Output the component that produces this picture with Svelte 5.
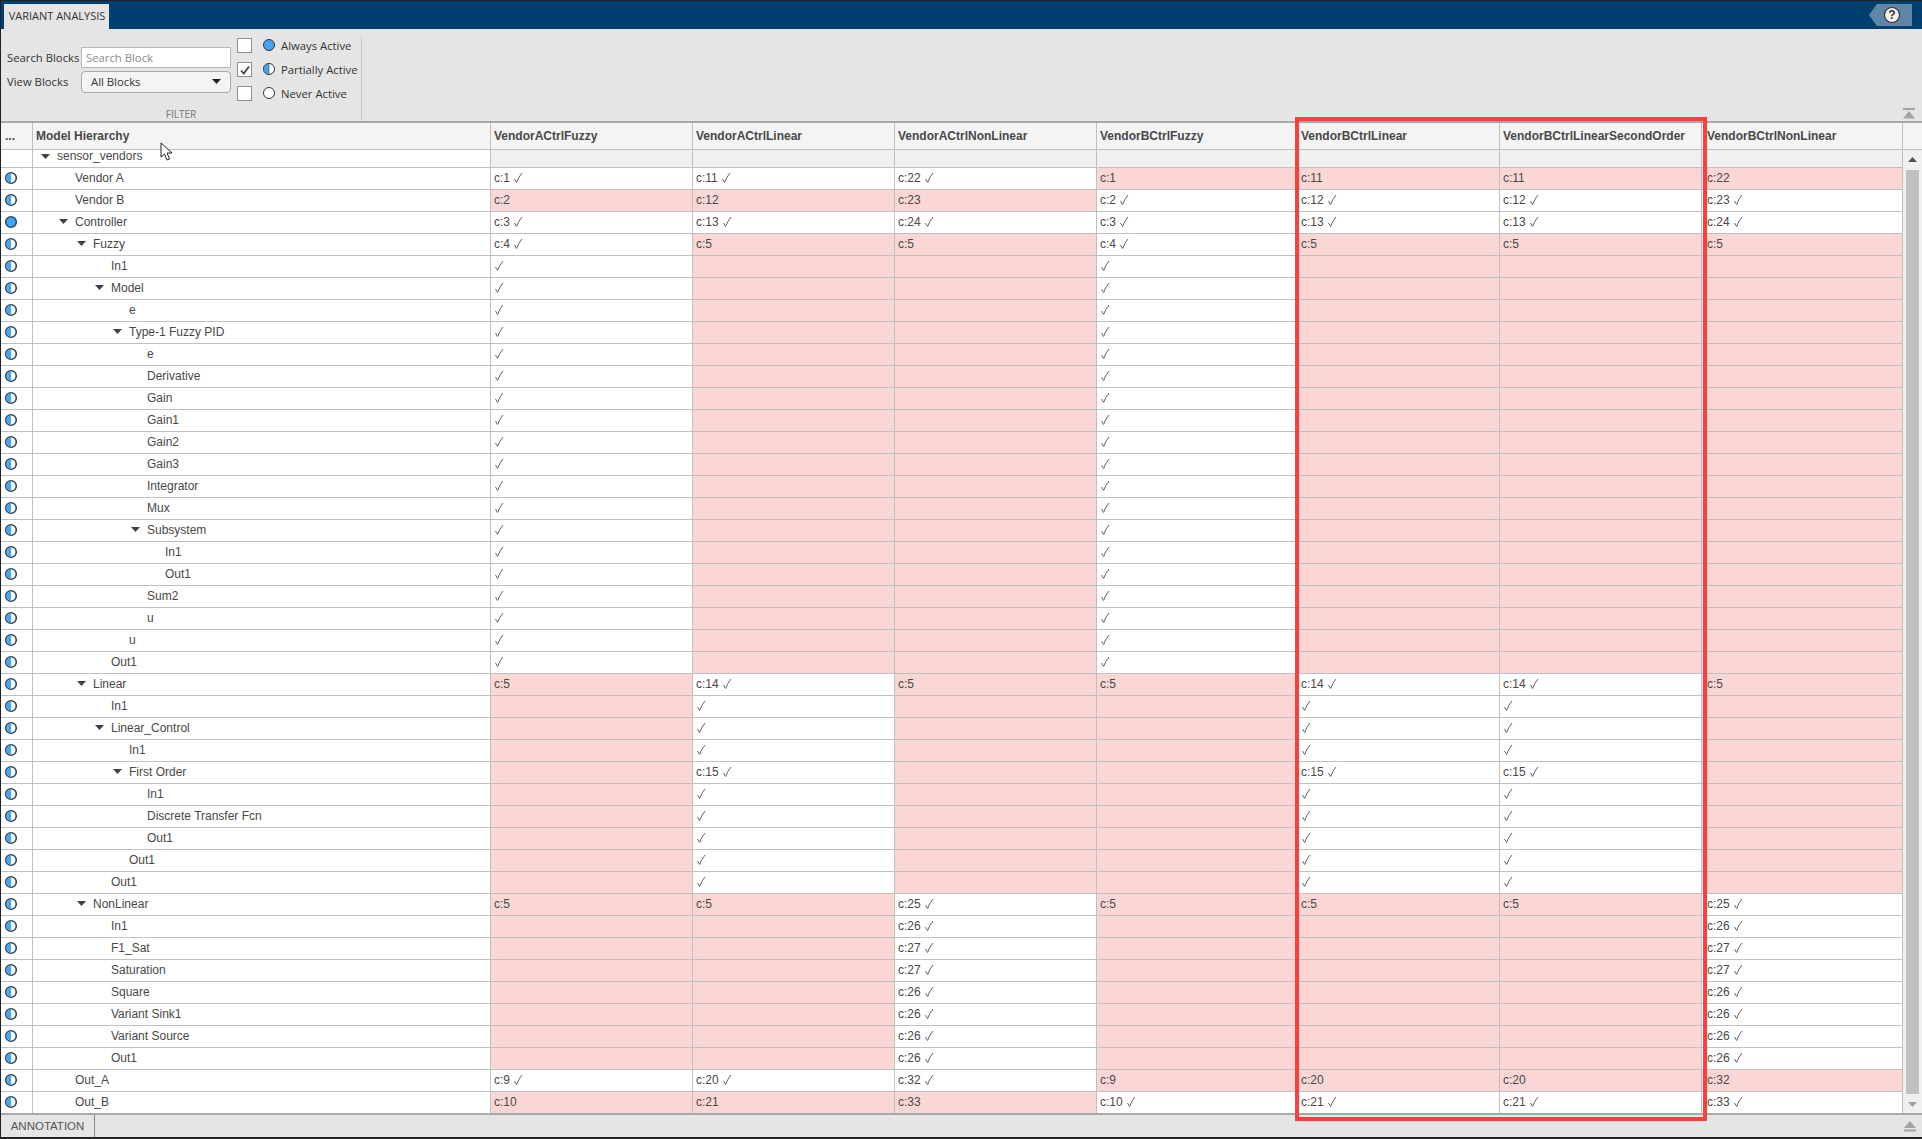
<script>
	const widths = [202, 202, 202, 201, 202, 202, 201];
	const headers = [
		'VendorACtrlFuzzy',
		'VendorACtrlLinear',
		'VendorACtrlNonLinear',
		'VendorBCtrlFuzzy',
		'VendorBCtrlLinear',
		'VendorBCtrlLinearSecondOrder',
		'VendorBCtrlNonLinear'
	];

	// "+" marks an active cell, a bare label or an empty string is an inactive (red) one
	const fuzzyCells = ['+', '', '', '+', '', '', ''];
	const linearCells = ['', '+', '', '', '+', '+', ''];
	const nl = (c) => ['', '', c + '+', '', '', '', c + '+'];

	const rows = [
		{ name: 'Vendor A', level: 1, cells: ['c:1+', 'c:11+', 'c:22+', 'c:1', 'c:11', 'c:11', 'c:22'] },
		{ name: 'Vendor B', level: 1, cells: ['c:2', 'c:12', 'c:23', 'c:2+', 'c:12+', 'c:12+', 'c:23+'] },
		{ name: 'Controller', level: 1, open: true, full: true, cells: ['c:3+', 'c:13+', 'c:24+', 'c:3+', 'c:13+', 'c:13+', 'c:24+'] },
		{ name: 'Fuzzy', level: 2, open: true, cells: ['c:4+', 'c:5', 'c:5', 'c:4+', 'c:5', 'c:5', 'c:5'] },
		{ name: 'In1', level: 3, cells: fuzzyCells },
		{ name: 'Model', level: 3, open: true, cells: fuzzyCells },
		{ name: 'e', level: 4, cells: fuzzyCells },
		{ name: 'Type-1 Fuzzy PID', level: 4, open: true, cells: fuzzyCells },
		{ name: 'e', level: 5, cells: fuzzyCells },
		{ name: 'Derivative', level: 5, cells: fuzzyCells },
		{ name: 'Gain', level: 5, cells: fuzzyCells },
		{ name: 'Gain1', level: 5, cells: fuzzyCells },
		{ name: 'Gain2', level: 5, cells: fuzzyCells },
		{ name: 'Gain3', level: 5, cells: fuzzyCells },
		{ name: 'Integrator', level: 5, cells: fuzzyCells },
		{ name: 'Mux', level: 5, cells: fuzzyCells },
		{ name: 'Subsystem', level: 5, open: true, cells: fuzzyCells },
		{ name: 'In1', level: 6, cells: fuzzyCells },
		{ name: 'Out1', level: 6, cells: fuzzyCells },
		{ name: 'Sum2', level: 5, cells: fuzzyCells },
		{ name: 'u', level: 5, cells: fuzzyCells },
		{ name: 'u', level: 4, cells: fuzzyCells },
		{ name: 'Out1', level: 3, cells: fuzzyCells },
		{ name: 'Linear', level: 2, open: true, cells: ['c:5', 'c:14+', 'c:5', 'c:5', 'c:14+', 'c:14+', 'c:5'] },
		{ name: 'In1', level: 3, cells: linearCells },
		{ name: 'Linear_Control', level: 3, open: true, cells: linearCells },
		{ name: 'In1', level: 4, cells: linearCells },
		{ name: 'First Order', level: 4, open: true, cells: ['', 'c:15+', '', '', 'c:15+', 'c:15+', ''] },
		{ name: 'In1', level: 5, cells: linearCells },
		{ name: 'Discrete Transfer Fcn', level: 5, cells: linearCells },
		{ name: 'Out1', level: 5, cells: linearCells },
		{ name: 'Out1', level: 4, cells: linearCells },
		{ name: 'Out1', level: 3, cells: linearCells },
		{ name: 'NonLinear', level: 2, open: true, cells: ['c:5', 'c:5', 'c:25+', 'c:5', 'c:5', 'c:5', 'c:25+'] },
		{ name: 'In1', level: 3, cells: nl('c:26') },
		{ name: 'F1_Sat', level: 3, cells: nl('c:27') },
		{ name: 'Saturation', level: 3, cells: nl('c:27') },
		{ name: 'Square', level: 3, cells: nl('c:26') },
		{ name: 'Variant Sink1', level: 3, cells: nl('c:26') },
		{ name: 'Variant Source', level: 3, cells: nl('c:26') },
		{ name: 'Out1', level: 3, cells: nl('c:26') },
		{ name: 'Out_A', level: 1, cells: ['c:9+', 'c:20+', 'c:32+', 'c:9', 'c:20', 'c:20', 'c:32'] },
		{ name: 'Out_B', level: 1, cells: ['c:10', 'c:21', 'c:33', 'c:10+', 'c:21+', 'c:21+', 'c:33+'] }
	];

	const gridCols = `32px 458px ${widths.map((w) => w + 'px').join(' ')}`;
</script>

{#snippet check()}
	<svg class="check" width="10" height="12" viewBox="0 0 10 12"><path d="M1.5 7 L3.6 10.5 Q5.5 5 9 1" fill="none" stroke="#5f6368" stroke-width="1" /></svg>
{/snippet}

{#snippet arrow()}
	<svg class="arrow" width="9" height="5" viewBox="0 0 9 5"><path d="M0 0H9L4.5 5Z" fill="#404040" /></svg>
{/snippet}

<div class="window">
	<header class="titlebar">
		<div class="tab">VARIANT ANALYSIS</div>
		<div class="help">
			<svg width="22" height="22" viewBox="0 0 22 22"><circle cx="11" cy="11" r="7.5" fill="#f2f2f2" stroke="#333" stroke-width="1.2" /><text x="11" y="15" text-anchor="middle" class="qmark">?</text></svg>
		</div>
	</header>

	<section class="toolbar">
		<div class="filter">
			<div class="filter-body">
				<div class="fields">
					<div class="field">
						<span class="field-label">Search Blocks</span>
						<div class="search">Search Block</div>
					</div>
					<div class="field">
						<span class="field-label">View Blocks</span>
						<div class="select">All Blocks<svg width="9" height="5" viewBox="0 0 9 5"><path d="M0 0H9L4.5 5Z" fill="#222" /></svg></div>
					</div>
				</div>
				<div class="legend">
					<div class="legend-row">
						<span class="box"></span>
						<svg class="dot" width="14" height="14" viewBox="0 0 14 14"><circle cx="7" cy="7" r="5.5" fill="#42a5f5" stroke="#333" /></svg>
						<span>Always Active</span>
					</div>
					<div class="legend-row">
						<span class="box"><svg width="14" height="14" viewBox="0 0 14 14"><path d="M3 7.5 L5.8 10.5 L11 3.5" fill="none" stroke="#444" stroke-width="1.8" /></svg></span>
						<svg class="dot" width="14" height="14" viewBox="0 0 14 14"><circle cx="7" cy="7" r="5.5" fill="#fff" stroke="#333" /><path d="M7 1.5A5.5 5.5 0 0 0 7 12.5Z" fill="#42a5f5" stroke="#333" stroke-width="0.5" /></svg>
						<span>Partially Active</span>
					</div>
					<div class="legend-row">
						<span class="box"></span>
						<svg class="dot" width="14" height="14" viewBox="0 0 14 14"><circle cx="7" cy="7" r="5.5" fill="#fff" stroke="#333" /></svg>
						<span>Never Active</span>
					</div>
				</div>
			</div>
			<div class="filter-title">FILTER</div>
		</div>
		<svg class="collapse" width="12" height="11" viewBox="0 0 12 11"><path d="M0 0H12V2H0ZM6 3L12 10.5H0Z" fill="#a3a3a3" /></svg>
	</section>

	<section class="table">
		<div class="table-main">
			<div class="row head" style={`grid-template-columns: ${gridCols}`}>
				<div class="cell dots">...</div>
				<div class="cell">Model Hierarchy</div>
				{#each headers as h}
					<div class="cell">{h}</div>
				{/each}
			</div>
			<div class="row root" style={`grid-template-columns: ${gridCols}`}>
				<div class="cell blank"></div>
				<div class="cell name blank" style="padding-left: 24px">{@render arrow()}sensor_vendors</div>
				{#each widths as _}
					<div class="cell gray"></div>
				{/each}
			</div>
			{#each rows as row}
				<div class="row" style={`grid-template-columns: ${gridCols}`}>
					<div class="cell status">
						<svg width="14" height="14" viewBox="0 0 14 14">
							<circle cx="7" cy="7" r="5.3" fill={row.full ? '#42a5f5' : '#fff'} stroke="#2b4a63" stroke-width="1.6" />
							{#if !row.full}
								<path d="M7 2.5A4.5 4.5 0 0 0 7 11.5Z" fill="#42a5f5" />
							{/if}
						</svg>
					</div>
					<div class="cell name" style={`padding-left: ${row.level * 18 + 24}px`}>
						{#if row.open}{@render arrow()}{/if}{row.name}
					</div>
					{#each row.cells as c}
						<div class="cell" class:red={!c.endsWith('+')}>
							{c.replace('+', '')}{#if c.endsWith('+')}{#if c.length > 1}&nbsp;{/if}{@render check()}{/if}
						</div>
					{/each}
				</div>
			{/each}
		</div>
		<div class="scrollbar">
			<div class="scroll-head"></div>
			<div class="scroll-track">
				<svg width="9" height="5" viewBox="0 0 9 5"><path d="M0 5H9L4.5 0Z" fill="#505050" /></svg>
				<div class="thumb"></div>
				<svg width="9" height="5" viewBox="0 0 9 5"><path d="M0 0H9L4.5 5Z" fill="#a0a0a0" /></svg>
			</div>
		</div>
	</section>

	<footer class="annotation">
		<div class="anno-tab">ANNOTATION</div>
		<svg class="collapse-down" width="12" height="11" viewBox="0 0 12 11"><path d="M6 0L12 7H0ZM0 8.5H12V10.5H0Z" fill="#a3a3a3" /></svg>
	</footer>

	<div class="highlight"></div>
	<svg class="cursor" width="14" height="20" viewBox="0 0 14 20"><path d="M1 1V15L4.5 12L7 18L9.5 17L7 11H12Z" fill="#fff" stroke="#222" stroke-width="1" /></svg>
</div>

<style>
	:global(body) {
		margin: 0;
		background: #fff;
	}

	.window {
		position: relative;
		width: 1922px;
		height: 1139px;
		box-sizing: border-box;
		border: 1px solid #222;
		border-width: 1px 0 2px 1px;
		display: flex;
		flex-direction: column;
		overflow: hidden;
		font-family: 'Liberation Sans', Arial, sans-serif;
		font-size: 12px;
		color: #484848;
	}

	.titlebar {
		height: 28px;
		flex: none;
		background: #004071;
		display: flex;
		justify-content: space-between;
		align-items: flex-end;
		padding: 0 0 0 3px;
	}

	.tab {
		height: 25px;
		width: 105px;
		box-sizing: border-box;
		padding-left: 1px;
		background: #e5e5e5;
		font-family: 'Open Sans', sans-serif;
		font-size: 11px;
		line-height: 23px;
		text-align: center;
		color: #333;
	}

	.help {
		width: 43px;
		height: 22px;
		margin: 0 10px 3px 0;
		background: #5f86a8;
		clip-path: polygon(8px 0, 100% 0, 100% 100%, 8px 100%, 0 50%);
		display: flex;
		justify-content: flex-end;
		padding-right: 9px;
		box-sizing: border-box;
	}

	.qmark {
		font: bold 12px 'Liberation Sans', sans-serif;
		fill: #333;
	}

	.toolbar {
		height: 92px;
		flex: none;
		background: #e5e5e5;
		border-bottom: 2px solid #a8a8a8;
		position: relative;
		display: flex;
		font-family: 'Open Sans', sans-serif;
		font-size: 11.3px;
		color: #333;
	}

	.filter {
		width: 361px;
		height: 84px;
		margin-top: 8px;
		box-sizing: border-box;
		border-right: 1px solid #c8c8c8;
		display: flex;
		flex-direction: column;
		justify-content: space-between;
	}

	.filter-body {
		display: flex;
		gap: 6px;
		padding: 1px 0 0 6px;
	}

	.fields {
		display: flex;
		flex-direction: column;
		gap: 1px;
		padding-top: 8px;
	}

	.field {
		display: flex;
		align-items: center;
		height: 23px;
	}

	.field-label {
		width: 74px;
		white-space: nowrap;
	}

	.search {
		width: 150px;
		height: 21px;
		box-sizing: border-box;
		background: #fff;
		border: 1px solid #b8b8b8;
		padding-left: 4px;
		line-height: 19px;
		color: #8a8a8a;
	}

	.select {
		width: 150px;
		height: 22px;
		box-sizing: border-box;
		background: #f4f4f4;
		border: 1px solid #a8a8a8;
		border-radius: 4px;
		padding: 0 9px;
		display: flex;
		justify-content: space-between;
		align-items: center;
	}

	.legend {
		display: flex;
		flex-direction: column;
		gap: 10px;
	}

	.legend-row {
		display: flex;
		align-items: center;
		height: 14px;
		white-space: nowrap;
	}

	.box {
		width: 13px;
		height: 13px;
		background: #fff;
		border: 1px solid #8f8f8f;
		display: block;
		margin-right: 10px;
	}

	.box svg {
		display: block;
	}

	.dot {
		margin-right: 5px;
	}

	.filter-title {
		text-align: center;
		font-size: 10px;
		color: #777;
		height: 13px;
		line-height: 12px;
	}

	.collapse {
		position: absolute;
		right: 7px;
		bottom: 2px;
	}

	.table {
		flex: 1;
		display: flex;
		min-height: 0;
		background: #fff;
	}

	.table-main {
		width: 1902px;
		flex: none;
	}

	.row {
		display: grid;
		height: 22px;
		box-sizing: border-box;
		border-bottom: 1px solid #c0c0c0;
	}

	.row.head {
		height: 27px;
		background: #f4f4f4;
		font-weight: bold;
		color: #484848;
	}

	.row.root {
		height: 18px;
	}

	.cell {
		box-sizing: border-box;
		border-right: 1px solid #c0c0c0;
		padding-left: 3px;
		line-height: 21px;
		white-space: nowrap;
		overflow: hidden;
	}

	.cell:last-child {
		padding-left: 5px;
	}

	.head .cell {
		line-height: 26px;
	}

	.head .dots {
		padding-left: 4px;
	}

	.root .cell {
		line-height: 13px;
	}

	.gray {
		background: #f0f0f0;
	}

	.red {
		background: #fad7d5;
	}

	.status {
		padding: 3px 0 0 3px;
		line-height: 0;
	}

	.name {
		position: relative;
	}

	.arrow {
		position: absolute;
		margin-left: -16px;
		margin-top: 7px;
	}

	.root .arrow {
		margin-top: 4px;
	}

	.check {
		vertical-align: -2px;
	}

	.scrollbar {
		flex: 1;
		display: flex;
		flex-direction: column;
	}

	.scroll-head {
		height: 27px;
		flex: none;
		background: #f4f4f4;
		border-bottom: 1px solid #c0c0c0;
		box-sizing: border-box;
	}

	.scroll-track {
		flex: 1;
		background: #f0f0f0;
		display: flex;
		flex-direction: column;
		align-items: center;
		padding: 7px 0 6px 0;
		gap: 8px;
	}

	.thumb {
		flex: 1;
		width: 13px;
		background: #c0c0c0;
	}

	.annotation {
		height: 22px;
		flex: none;
		background: #e5e5e5;
		border-top: 2px solid #a8a8a8;
		display: flex;
		justify-content: space-between;
		align-items: center;
		padding-right: 6px;
		box-sizing: content-box;
	}

	.anno-tab {
		width: 94px;
		height: 100%;
		box-sizing: border-box;
		border-right: 1px solid #888;
		text-align: center;
		line-height: 22px;
		color: #555;
		font-size: 11.5px;
	}

	.highlight {
		position: absolute;
		left: 1294px;
		top: 116px;
		width: 412px;
		height: 1004px;
		box-sizing: border-box;
		border: 4px solid #f9403f;
		pointer-events: none;
	}

	.cursor {
		position: absolute;
		left: 159px;
		top: 141px;
	}
</style>
